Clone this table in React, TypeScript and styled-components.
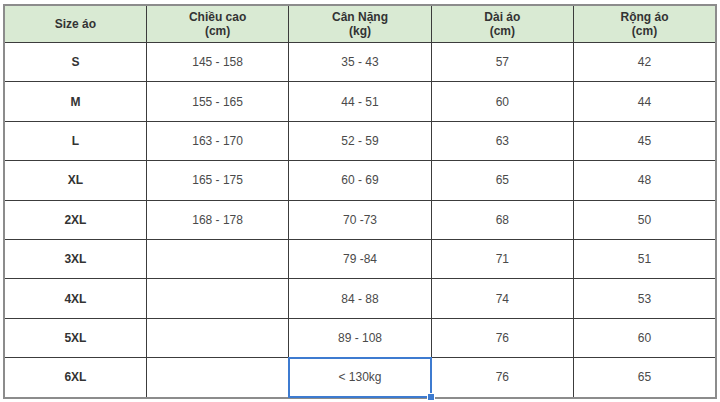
import React from "react";
import styled, { createGlobalStyle } from "styled-components";

const Global = createGlobalStyle`
  html, body { margin: 0; padding: 0; background: #ffffff; }
  body { font-family: "Liberation Sans", Arial, sans-serif; }
`;

const Page = styled.div`
  padding: 4px 3px 0 3px;
  width: 720px;
  height: 402px;
  box-sizing: border-box;
`;

const Table = styled.table`
  border-collapse: collapse;
  table-layout: fixed;
  width: 714px;
  border: 2px solid #8c8c8c;
`;

const HeadCell = styled.th`
  background: #d9ead3;
  height: 36px;
  padding: 0;
  border: 1px solid #3c3c3c;
  font-size: 12px;
  font-weight: bold;
  line-height: 14px;
  color: #333333;
  text-align: center;
  vertical-align: middle;
`;

const Cell = styled.td<{ $bold?: boolean }>`
  position: relative;
  height: 38.4px;
  padding: 0;
  border: 1px solid #3c3c3c;
  font-size: 12px;
  font-weight: ${(p) => (p.$bold ? "bold" : "normal")};
  color: ${(p) => (p.$bold ? "#333333" : "#4a4a4a")};
  text-align: center;
  vertical-align: middle;
`;

const Selection = styled.div`
  position: absolute;
  inset: -1px;
  border: 2px solid #3d7bd0;
  pointer-events: none;
`;

const Handle = styled.div`
  position: absolute;
  right: -5px;
  bottom: -5px;
  width: 6px;
  height: 6px;
  background: #3d7bd0;
  border: 1px solid #ffffff;
`;

const headers: [string, string][] = [
  ["Size áo", ""],
  ["Chiều cao", "(cm)"],
  ["Cân Nặng", "(kg)"],
  ["Dài áo", "(cm)"],
  ["Rộng áo", "(cm)"],
];

const rows: string[][] = [
  ["S", "145 - 158", "35 - 43", "57", "42"],
  ["M", "155 - 165", "44 - 51", "60", "44"],
  ["L", "163 - 170", "52 - 59", "63", "45"],
  ["XL", "165 - 175", "60 - 69", "65", "48"],
  ["2XL", "168 - 178", "70 -73", "68", "50"],
  ["3XL", "", "79 -84", "71", "51"],
  ["4XL", "", "84 - 88", "74", "53"],
  ["5XL", "", "89 - 108", "76", "60"],
  ["6XL", "", "< 130kg", "76", "65"],
];

export default function App() {
  return (
    <>
      <Global />
      <Page>
        <Table>
          <thead>
            <tr>
              {headers.map(([a, b], i) => (
                <HeadCell key={i}>
                  {a}
                  {b && (
                    <>
                      <br />
                      {b}
                    </>
                  )}
                </HeadCell>
              ))}
            </tr>
          </thead>
          <tbody>
            {rows.map((r, ri) => (
              <tr key={ri}>
                {r.map((v, ci) => {
                  const selected = ri === rows.length - 1 && ci === 2;
                  return (
                    <Cell key={ci} $bold={ci === 0}>
                      {v}
                      {selected && (
                        <Selection>
                          <Handle />
                        </Selection>
                      )}
                    </Cell>
                  );
                })}
              </tr>
            ))}
          </tbody>
        </Table>
      </Page>
    </>
  );
}
